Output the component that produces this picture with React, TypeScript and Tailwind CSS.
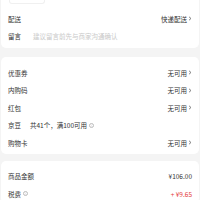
const font = { fontFamily: '"Noto Sans CJK SC", "Noto Sans", sans-serif' };

function Row({
  label,
  right,
  children,
}: {
  label: string;
  right?: React.ReactNode;
  children?: React.ReactNode;
}) {
  return (
    <div className="flex h-[17.5px] items-center justify-between px-[7px] text-[6.5px] leading-none text-[#333]">
      <div className="flex items-center">
        <span>{label}</span>
        {children}
      </div>
      {right}
    </div>
  );
}

function Chevron({ text }: { text: string }) {
  return (
    <span className="flex items-center gap-[1px]">
      {text}
      <svg width="4" height="5" viewBox="0 0 4 5" fill="none">
        <path d="M1 0.8 L3 2.5 L1 4.2" stroke="#555" strokeWidth="0.7" />
      </svg>
    </span>
  );
}

function Info() {
  return (
    <span className="ml-[2px] flex h-[5px] w-[5px] items-center justify-center rounded-full border-[0.5px] border-[#bbb] text-[3.5px] text-[#bbb]">
      i
    </span>
  );
}

export default function App() {
  return (
    <div className="h-[200px] w-[200px] overflow-hidden bg-[#f4f4f4]" style={font}>
      <div className="mx-[1px] rounded-b-[5px] bg-white pb-[3px]">
        <div className="mx-[8px] h-[4px] w-[36px] rounded-b-[3px] border-x border-b border-[#f0f0f0]" />
        <div className="h-[6px]" />
        <Row label="配送" right={<Chevron text="快递配送" />} />
        <Row label="留言">
          <span className="ml-[12px] text-[#c8c8c8]">建议留言前先与商家沟通确认</span>
        </Row>
      </div>
      <div className="mx-[1px] mt-[9px] rounded-[5px] bg-white pb-[2px] pt-[7px]">
        <Row label="优惠券" right={<Chevron text="无可用" />} />
        <Row label="内购码" right={<Chevron text="无可用" />} />
        <Row label="红包" right={<Chevron text="无可用" />} />
        <Row label="京豆">
          <span className="ml-[9px]">共41个，满100可用</span>
          <Info />
        </Row>
        <Row label="购物卡" right={<Chevron text="无可用" />} />
      </div>
      <div className="mx-[1px] mt-[7px] rounded-[5px] bg-white pt-[7px]">
        <Row label="商品金额" right={<span>¥106.00</span>} />
        <Row label="税费" right={<span className="text-[#e4393c]">+ ¥9.65</span>}>
          <Info />
        </Row>
      </div>
    </div>
  );
}
